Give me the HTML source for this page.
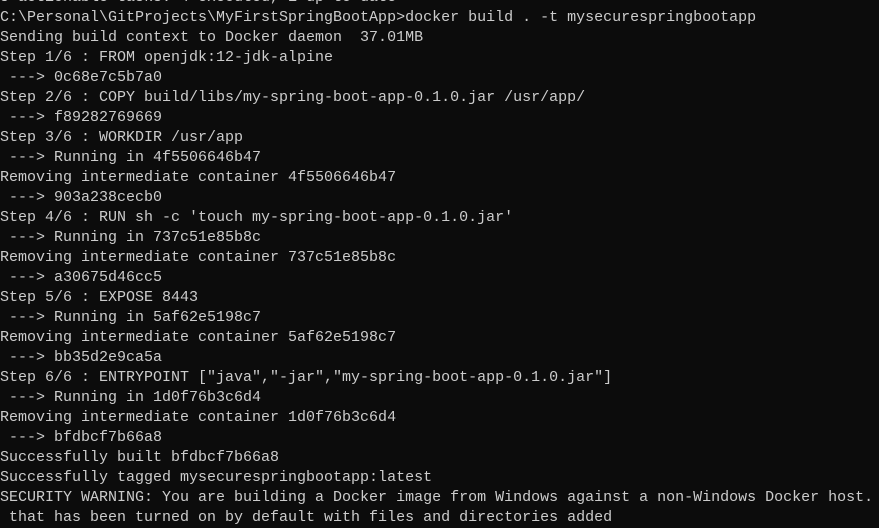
<!DOCTYPE html>
<html><head><style>
html,body{margin:0;padding:0;background:#0c0c0c;width:879px;height:512px;overflow:hidden}
pre{margin:0;position:absolute;left:0;top:-12px;font-family:"Liberation Mono",monospace;font-size:15px;line-height:20px;color:#cccccc;white-space:pre}
</style></head><body>
<pre>5 actionable tasks: 4 executed, 1 up-to-date
C:\Personal\GitProjects\MyFirstSpringBootApp&gt;docker build . -t mysecurespringbootapp
Sending build context to Docker daemon  37.01MB
Step 1/6 : FROM openjdk:12-jdk-alpine
 ---&gt; 0c68e7c5b7a0
Step 2/6 : COPY build/libs/my-spring-boot-app-0.1.0.jar /usr/app/
 ---&gt; f89282769669
Step 3/6 : WORKDIR /usr/app
 ---&gt; Running in 4f5506646b47
Removing intermediate container 4f5506646b47
 ---&gt; 903a238cecb0
Step 4/6 : RUN sh -c 'touch my-spring-boot-app-0.1.0.jar'
 ---&gt; Running in 737c51e85b8c
Removing intermediate container 737c51e85b8c
 ---&gt; a30675d46cc5
Step 5/6 : EXPOSE 8443
 ---&gt; Running in 5af62e5198c7
Removing intermediate container 5af62e5198c7
 ---&gt; bb35d2e9ca5a
Step 6/6 : ENTRYPOINT ["java","-jar","my-spring-boot-app-0.1.0.jar"]
 ---&gt; Running in 1d0f76b3c6d4
Removing intermediate container 1d0f76b3c6d4
 ---&gt; bfdbcf7b66a8
Successfully built bfdbcf7b66a8
Successfully tagged mysecurespringbootapp:latest
SECURITY WARNING: You are building a Docker image from Windows against a non-Windows Docker host.
 that has been turned on by default with files and directories added</pre>
</body></html>
